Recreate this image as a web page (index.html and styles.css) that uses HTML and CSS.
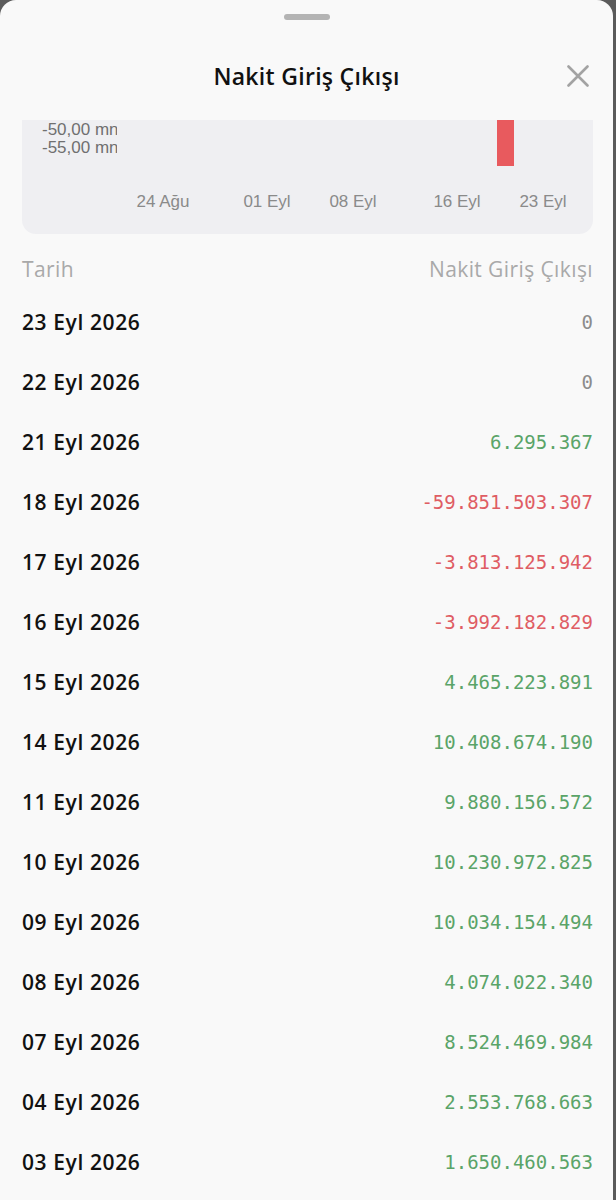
FILE: index.html
```html
<!DOCTYPE html>
<html lang="tr">
<head>
    <meta charset="utf-8">
    <title>Nakit Giriş Çıkışı</title>
    <link rel="stylesheet" href="styles.css">
</head>
<body>
    <div class="sheet">
        <div class="sheet-header">
            <div class="handle"></div>
            <div class="title-row">
                <h1>Nakit Giriş Çıkışı</h1>
                <button class="close-btn" aria-label="Kapat">
                    <svg width="22" height="22" viewBox="0 0 22 22">
                        <path d="M1.5 1.5 L20.5 20.5 M20.5 1.5 L1.5 20.5" stroke="#a3a3a3" stroke-width="2.6" stroke-linecap="round" fill="none"/>
                    </svg>
                </button>
            </div>
        </div>

        <div class="content">
            <!-- grafik (üst kısmı kaydırılmış) -->
            <div class="chart-card">
                <svg class="chart" width="572" height="114" viewBox="0 0 572 114">
                    <defs>
                        <clipPath id="axisClip"><rect x="0" y="0" width="95" height="114"/></clipPath>
                    </defs>
                    <g class="y-axis" clip-path="url(#axisClip)">
                        <text x="20" y="15">-50,00 mn</text>
                        <text x="20" y="33">-55,00 mn</text>
                    </g>
                    <rect x="475" y="0" width="17" height="46" fill="#e85a5e"/>
                    <g class="x-axis">
                        <text x="141" y="87">24 Ağu</text>
                        <text x="245" y="87">01 Eyl</text>
                        <text x="331" y="87">08 Eyl</text>
                        <text x="435" y="87">16 Eyl</text>
                        <text x="521" y="87">23 Eyl</text>
                    </g>
                </svg>
            </div>

            <div class="table-head">
                <span>Tarih</span>
                <span>Nakit Giriş Çıkışı</span>
            </div>

            <ul class="rows">
                <li><span class="date">23 Eyl 2026</span><span class="val zero">0</span></li>
                <li><span class="date">22 Eyl 2026</span><span class="val zero">0</span></li>
                <li><span class="date">21 Eyl 2026</span><span class="val pos">6.295.367</span></li>
                <li><span class="date">18 Eyl 2026</span><span class="val neg">-59.851.503.307</span></li>
                <li><span class="date">17 Eyl 2026</span><span class="val neg">-3.813.125.942</span></li>
                <li><span class="date">16 Eyl 2026</span><span class="val neg">-3.992.182.829</span></li>
                <li><span class="date">15 Eyl 2026</span><span class="val pos">4.465.223.891</span></li>
                <li><span class="date">14 Eyl 2026</span><span class="val pos">10.408.674.190</span></li>
                <li><span class="date">11 Eyl 2026</span><span class="val pos">9.880.156.572</span></li>
                <li><span class="date">10 Eyl 2026</span><span class="val pos">10.230.972.825</span></li>
                <li><span class="date">09 Eyl 2026</span><span class="val pos">10.034.154.494</span></li>
                <li><span class="date">08 Eyl 2026</span><span class="val pos">4.074.022.340</span></li>
                <li><span class="date">07 Eyl 2026</span><span class="val pos">8.524.469.984</span></li>
                <li><span class="date">04 Eyl 2026</span><span class="val pos">2.553.768.663</span></li>
                <li><span class="date">03 Eyl 2026</span><span class="val pos">1.650.460.563</span></li>
            </ul>
        </div>
    </div>
</body>
</html>
```

FILE: styles.css
```css
body {
    margin: 0;
    padding: 0;
    background-color: #5b5b5b;
    font-family: "Open Sans", Arial, sans-serif;
    overflow: hidden;
}

.sheet {
    width: 613px;
    height: 1200px;
    background-color: #f9f9f9;
    border-radius: 16px 16px 0 0;
    overflow: hidden;
}

.sheet-header {
    height: 120px;
    display: flex;
    flex-direction: column;
    align-items: center;
}

.handle {
    width: 46px;
    height: 6px;
    margin-top: 14px;
    border-radius: 3px;
    background-color: #b4b4b4;
}

.title-row {
    position: relative;
    width: 100%;
    height: 68px;
    margin-top: 22px;
    display: flex;
    justify-content: center;
    align-items: center;
}

.title-row h1 {
    margin: 0;
    font-size: 23px;
    font-weight: 600;
    letter-spacing: 0.3px;
    color: #111;
}

.close-btn {
    position: absolute;
    right: 24px;
    top: 23px;
    padding: 0;
    border: none;
    background: none;
    width: 22px;
    height: 22px;
}

.content {
    padding: 0 20px 0 22px;
}

.chart-card {
    height: 114px;
    background-color: #efeff2;
    border-radius: 0 0 14px 14px;
}

.chart {
    display: block;
}

.chart text {
    font-family: "Liberation Sans", Arial, sans-serif;
    font-size: 17px;
}

.y-axis text {
    fill: #707070;
}

.x-axis text {
    fill: #8a8a8a;
    text-anchor: middle;
}

.table-head {
    display: flex;
    justify-content: space-between;
    align-items: center;
    height: 46px;
    margin-top: 12px;
    font-size: 21px;
    letter-spacing: 0.4px;
    color: #a9a9a9;
}

.rows {
    list-style: none;
    margin: 0;
    padding: 0;
}

.rows li {
    height: 60px;
    display: flex;
    justify-content: space-between;
    align-items: center;
}

.date {
    font-size: 21px;
    font-weight: 600;
    letter-spacing: 0.6px;
    color: #111;
}

.val {
    font-family: "DejaVu Sans Mono", monospace;
    font-size: 19px;
}

.val.zero {
    color: #8c8c8c;
}

.val.pos {
    color: #5aa468;
}

.val.neg {
    color: #df5d64;
}
```
